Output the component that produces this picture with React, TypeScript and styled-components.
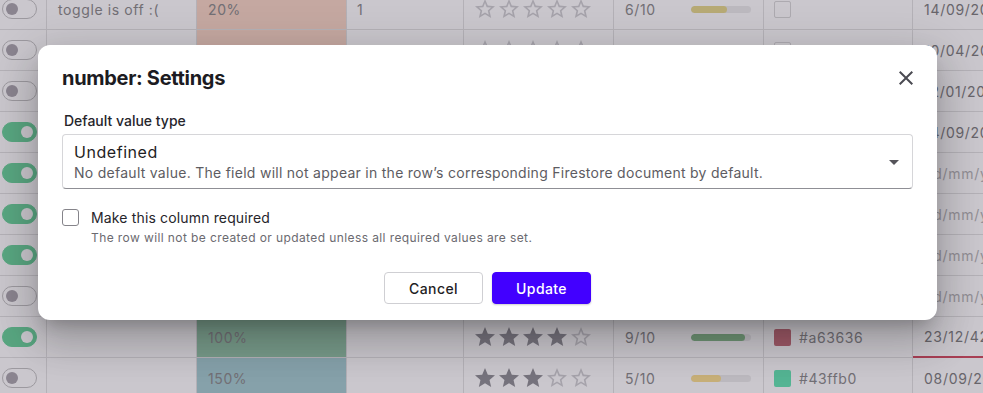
import styled, { createGlobalStyle } from 'styled-components';

const GlobalStyle = createGlobalStyle`
  html, body {
    margin: 0;
    padding: 0;
    width: 983px;
    height: 393px;
    overflow: hidden;
    background: #fff;
    font-family: Inter, "Noto Sans", sans-serif;
  }
`;

const StyledPage = styled.div`
  position: relative;
  width: 983px;
  height: 393px;
  overflow: hidden;
`;

const StyledTable = styled.div`
  margin-top: -11px;
  display: flex;
  flex-direction: column;
`;

const StyledRow = styled.div`
  display: grid;
  grid-template-columns: 47px 150px 150px 117px 150px 150px 149px 200px;
  height: 41px;
  border-bottom: 1px solid #e2e2e2;
  box-sizing: border-box;
`;

const StyledCell = styled.div<{ $bg?: string; $pad?: number; $error?: boolean }>`
  display: flex;
  align-items: center;
  gap: 8px;
  box-sizing: border-box;
  padding: 0 ${(p) => p.$pad ?? 11}px;
  border-right: 1px solid #e2e2e2;
  background: ${(p) => p.$bg ?? 'transparent'};
  border-bottom: ${(p) => (p.$error ? '2px solid #d24a5e' : 'none')};
  margin-bottom: ${(p) => (p.$error ? '-1px' : '0')};
  font-size: 14px;
  color: #8a8a8a;
  letter-spacing: 0.6px;
  white-space: nowrap;
  overflow: hidden;
`;

const StyledSpread = styled(StyledCell)`
  justify-content: space-between;
  padding-right: 12px;
`;

const StyledDate = styled.span<{ $placeholder?: boolean }>`
  color: ${(p) => (p.$placeholder ? '#b4b4b4' : '#7c7c7c')};
  letter-spacing: 0.7px;
`;

const StyledSwitch = styled.div<{ $on: boolean }>`
  position: relative;
  width: 35px;
  height: 20px;
  border-radius: 10px;
  box-sizing: border-box;
  background: ${(p) => (p.$on ? '#69d39a' : '#fff')};
  border: 1px solid ${(p) => (p.$on ? '#69d39a' : '#c2c2c2')};

  &::after {
    content: '';
    position: absolute;
    top: 3px;
    left: ${(p) => (p.$on ? '18px' : '3px')};
    width: 12px;
    height: 12px;
    border-radius: 50%;
    background: ${(p) => (p.$on ? '#fff' : '#aaa6ad')};
  }
`;

const StyledStars = styled.div`
  display: flex;
  margin-left: -1px;
`;

const StyledBar = styled.div`
  width: 60px;
  height: 7px;
  border-radius: 4px;
  background: #ececec;
  overflow: hidden;
`;

const StyledBarFill = styled.div<{ $color: string }>`
  height: 100%;
  border-radius: 4px;
  background: ${(p) => p.$color};
`;

const StyledSwatch = styled.div<{ $color?: string }>`
  width: 17px;
  height: 17px;
  border-radius: 2px;
  box-sizing: border-box;
  background: ${(p) => p.$color ?? '#fff'};
  border: 1px solid ${(p) => (p.$color ? 'transparent' : '#d8d8d8')};
  flex-shrink: 0;
`;

const StyledBackdrop = styled.div`
  position: absolute;
  inset: 0;
  background: rgba(45, 30, 55, 0.25);
  display: flex;
  align-items: flex-start;
  padding: 45px 0 0 38px;
  box-sizing: border-box;
`;

const StyledDialog = styled.div`
  width: 899px;
  height: 275px;
  box-sizing: border-box;
  background: #fff;
  border-radius: 12px;
  padding: 0 24px;
  display: flex;
  flex-direction: column;
  box-shadow:
    0px 11px 15px -7px rgba(0, 0, 0, 0.2),
    0px 24px 38px 3px rgba(0, 0, 0, 0.14),
    0px 9px 46px 8px rgba(0, 0, 0, 0.12);
`;

const StyledHeader = styled.div`
  display: flex;
  justify-content: space-between;
  align-items: center;
  padding-top: 19px;
  height: 28px;
  margin-bottom: 19px;
`;

const StyledTitle = styled.h2`
  margin: 0;
  font-size: 20px;
  line-height: 28px;
  font-weight: 700;
  color: #1c1b22;
  letter-spacing: -0.3px;
`;

const StyledClose = styled.button`
  border: none;
  background: none;
  padding: 0;
  margin-right: -5px;
  width: 24px;
  height: 24px;
  display: flex;
  color: #4a4a52;
`;

const StyledLabel = styled.label`
  display: block;
  margin-left: 2px;
  font-size: 14px;
  line-height: 20px;
  font-weight: 500;
  color: #26252b;
  margin-bottom: 3px;
`;

const StyledSelect = styled.div`
  position: relative;
  height: 55px;
  box-sizing: border-box;
  border: 1px solid #d6d6d9;
  border-bottom-color: #8f8f95;
  border-radius: 4px;
  padding: 6px 11px 0;
`;

const StyledValue = styled.div`
  font-size: 16px;
  line-height: 23px;
  color: #1f1e24;
  letter-spacing: 0.55px;
`;

const StyledHint = styled.div<{ $small?: boolean }>`
  font-size: ${(p) => (p.$small ? '12px' : '14px')};
  line-height: ${(p) => (p.$small ? '16px' : '18px')};
  color: ${(p) => (p.$small ? '#6b6a70' : '#5d5c62')};
  letter-spacing: ${(p) => (p.$small ? '0.4px' : '0.27px')};
`;

const StyledArrow = styled.svg`
  position: absolute;
  right: 6px;
  top: 15px;
  width: 24px;
  height: 24px;
  fill: #55545a;
`;

const StyledCheckRow = styled.div`
  display: flex;
  gap: 12px;
  margin-top: 20px;
`;

const StyledCheckbox = styled.div`
  width: 17px;
  height: 17px;
  box-sizing: border-box;
  border: 1.5px solid #85848a;
  border-radius: 3px;
  flex-shrink: 0;
`;

const StyledCheckText = styled.div`
  display: flex;
  flex-direction: column;
  gap: 4px;
`;

const StyledCheckLabel = styled.div`
  font-size: 14px;
  line-height: 17px;
  color: #26252b;
  letter-spacing: 0.15px;
`;

const StyledActions = styled.div`
  display: flex;
  justify-content: center;
  gap: 9px;
  margin-top: 26px;
`;

const StyledButton = styled.button<{ $primary?: boolean }>`
  width: 99px;
  height: 32px;
  box-sizing: border-box;
  border-radius: 4px;
  font-family: Inter, sans-serif;
  font-size: 14px;
  font-weight: 500;
  letter-spacing: 0.4px;
  border: 1px solid ${(p) => (p.$primary ? '#4200ff' : '#cfcfd3')};
  background: ${(p) => (p.$primary ? '#4200ff' : '#fff')};
  color: ${(p) => (p.$primary ? '#fff' : '#1f1e24')};
  box-shadow: ${(p) => (p.$primary ? '0 1px 2px rgba(0,0,0,0.2)' : 'none')};
`;

const STAR =
  'M12 17.27L18.18 21l-1.64-7.03L22 9.24l-7.19-.61L12 2 9.19 8.63 2 9.24l5.46 4.73L5.82 21z';
const STAR_BORDER =
  'M22 9.24l-7.19-.62L12 2 9.19 8.63 2 9.24l5.46 4.73L5.82 21 12 17.27 18.18 21l-1.63-7.03L22 9.24zM12 15.4l-3.76 2.27 1-4.28-3.32-2.88 4.38-.38L12 6.1l1.71 4.04 4.38.38-3.32 2.88 1 4.28L12 15.4z';

const Stars = ({ value }: { value: number }) => (
  <StyledStars>
    {[0, 1, 2, 3, 4].map((i) => (
      <svg key={i} width="24" height="24" viewBox="0 0 24 24">
        <path d={i < value ? STAR : STAR_BORDER} fill={i < value ? '#8f8f94' : '#cfcfd2'} />
      </svg>
    ))}
  </StyledStars>
);

type RowData = {
  on: boolean;
  text?: string;
  percent?: string;
  pctBg?: string;
  num?: string;
  stars?: number;
  score?: string;
  bar?: { value: number; color: string };
  swatch?: string;
  hex?: string;
  date: string;
  placeholder?: boolean;
  error?: boolean;
};

const rows: RowData[] = [
  { on: false, text: 'toggle is off :(', percent: '20%', pctBg: '#f8d6c4', num: '1', stars: 0, score: '6/10', bar: { value: 60, color: '#e6d98a' }, date: '14/09/2021' },
  { on: false, pctBg: '#f8d6c4', stars: 0, date: '10/04/2021' },
  { on: false, date: '12/01/2021' },
  { on: true, date: '14/09/2021' },
  { on: true, date: 'dd/mm/yyyy', placeholder: true },
  { on: true, date: 'dd/mm/yyyy', placeholder: true },
  { on: true, date: 'dd/mm/yyyy', placeholder: true },
  { on: false, date: 'dd/mm/yyyy', placeholder: true },
  { on: true, percent: '100%', pctBg: '#92c4a6', stars: 4, score: '9/10', bar: { value: 90, color: '#84bb88' }, swatch: '#c56d77', hex: '#a63636', date: '23/12/4242', error: true },
  { on: false, percent: '150%', pctBg: '#a4cdd0', stars: 3, score: '5/10', bar: { value: 50, color: '#fbdf8e' }, swatch: '#62e6b2', hex: '#43ffb0', date: '08/09/2021' },
];

const CloseIcon = () => (
  <svg width="24" height="24" viewBox="0 0 24 24" fill="currentColor">
    <path d="M19 6.41L17.59 5 12 10.59 6.41 5 5 6.41 10.59 12 5 17.59 6.41 19 12 13.41 17.59 19 19 17.59 13.41 12z" />
  </svg>
);

export default function App() {
  return (
    <StyledPage>
      <GlobalStyle />
      <StyledTable>
        {rows.map((r, i) => (
          <StyledRow key={i}>
            <StyledCell $pad={2}>
              <StyledSwitch $on={r.on} />
            </StyledCell>
            <StyledCell>{r.text}</StyledCell>
            <StyledCell $bg={r.pctBg}>{r.percent}</StyledCell>
            <StyledCell $pad={10}>{r.num}</StyledCell>
            <StyledCell $pad={10}>{r.stars !== undefined && <Stars value={r.stars} />}</StyledCell>
            <StyledSpread>
              <span>{r.score}</span>
              {r.bar && (
                <StyledBar>
                  <StyledBarFill $color={r.bar.color} style={{ width: `${r.bar.value}%` }} />
                </StyledBar>
              )}
            </StyledSpread>
            <StyledCell $pad={10}>
              {(i < 2 || r.swatch) && <StyledSwatch $color={r.swatch} />}
              {r.hex}
            </StyledCell>
            <StyledCell $error={r.error}>
              <StyledDate $placeholder={r.placeholder}>{r.date}</StyledDate>
            </StyledCell>
          </StyledRow>
        ))}
      </StyledTable>

      <StyledBackdrop>
        <StyledDialog>
          <StyledHeader>
            <StyledTitle>number: Settings</StyledTitle>
            <StyledClose>
              <CloseIcon />
            </StyledClose>
          </StyledHeader>
          <StyledLabel>Default value type</StyledLabel>
          <StyledSelect>
            <StyledValue>Undefined</StyledValue>
            <StyledHint>
              No default value. The field will not appear in the row’s corresponding Firestore document by default.
            </StyledHint>
            <StyledArrow viewBox="0 0 24 24">
              <path d="M7 10l5 5 5-5z" />
            </StyledArrow>
          </StyledSelect>
          <StyledCheckRow>
            <StyledCheckbox />
            <StyledCheckText>
              <StyledCheckLabel>Make this column required</StyledCheckLabel>
              <StyledHint $small>The row will not be created or updated unless all required values are set.</StyledHint>
            </StyledCheckText>
          </StyledCheckRow>
          <StyledActions>
            <StyledButton>Cancel</StyledButton>
            <StyledButton $primary>Update</StyledButton>
          </StyledActions>
        </StyledDialog>
      </StyledBackdrop>
    </StyledPage>
  );
}
